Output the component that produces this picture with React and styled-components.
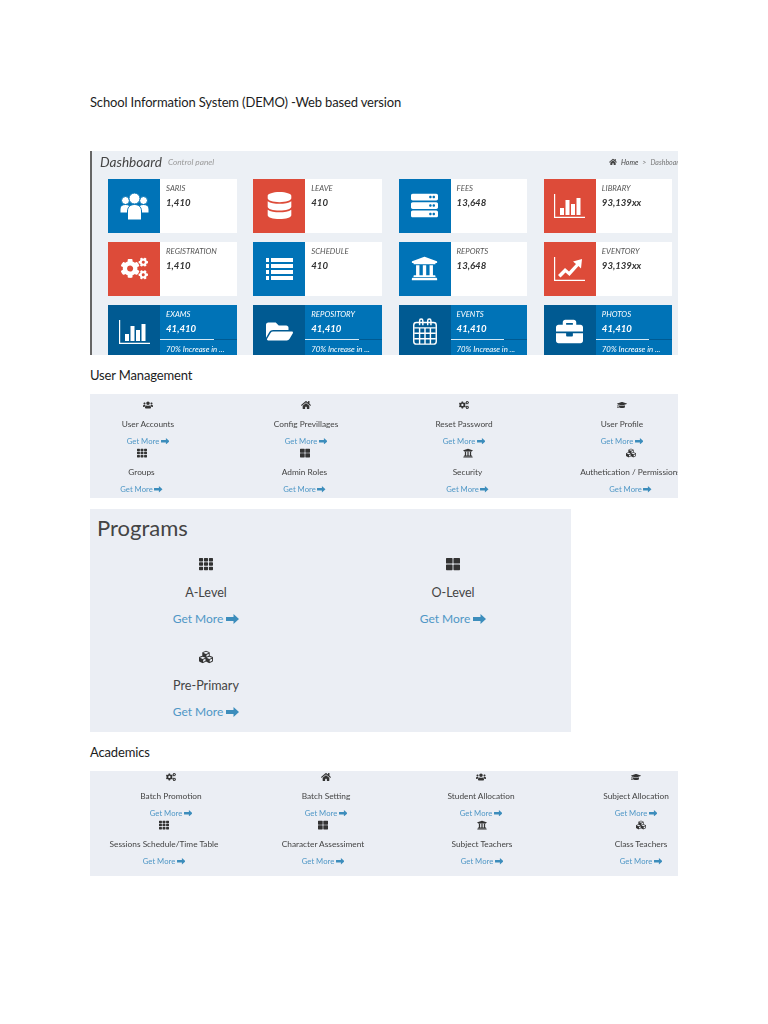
import { createGlobalStyle, styled } from "styled-components"
import {
  FaUsers, FaDatabase, FaServer, FaCogs, FaUniversity, FaFolderOpen, FaBriefcase,
  FaHome, FaTh, FaThLarge, FaCubes, FaGraduationCap,
} from "react-icons/fa"

const GlobalStyle = createGlobalStyle`
  html, body { margin: 0; background: #fff; }
  body { font-family: "Lato", "Liberation Sans", sans-serif; color: #222; }
`

const Page = styled.div`
  width: 768px;
  height: 1024px;
  overflow: hidden;
  box-sizing: border-box;
  padding: 82px 0 0 90px;
`

const Heading = styled.h2`
  margin: ${props => props.$margin};
  font-size: 13px;
  line-height: 18px;
  font-weight: 400;
  letter-spacing: -0.15px;
  color: #1c1c1c;
`

const Dashboard = styled.section`
  width: 588px;
  height: 204px;
  box-sizing: border-box;
  margin-top: 40px;
  overflow: hidden;
  background: #ecf0f5;
  border-left: 2px solid #666;
  font-style: italic;
  filter: blur(0.35px);
`

const DashHeader = styled.header`
  height: 28px;
  box-sizing: border-box;
  padding: 0 0 6px 8px;
  display: flex;
  align-items: center;
  gap: 6px;
  white-space: nowrap;
`

const DashTitle = styled.h1`
  margin: 0;
  font-size: 13.6px;
  font-weight: 400;
  color: #444;
`

const DashSub = styled.span`
  font-size: 8.3px;
  color: #9a9a9a;
`

const Crumbs = styled.div`
  margin-left: auto;
  width: 69px;
  overflow: hidden;
  display: flex;
  align-items: center;
  gap: 4px;
  font-size: 7px;
  color: #777;
  svg { color: #444; flex: none; width: 8px; height: 8px; }
  b { font-weight: 400; color: #444; }
`

const BoxGrid = styled.div`
  display: grid;
  grid-template-columns: repeat(4, 128.6px);
  grid-auto-rows: 54px;
  column-gap: 16.7px;
  row-gap: 9px;
  padding-left: 16px;
`

const Box = styled.article`
  display: flex;
  min-width: 0;
  background: ${props => (props.$filled ? "#0073b7" : "#fff")};
  color: ${props => (props.$filled ? "#fff" : "#333")};
`

const BoxIcon = styled.div`
  flex: none;
  width: 52px;
  display: flex;
  align-items: center;
  justify-content: center;
  background: ${props => props.$bg};
  color: #fff;
  font-size: 27px;
`

const BoxBody = styled.div`
  flex: 1;
  min-width: 0;
  padding: 4px 0 0 6px;
`

const BoxLabel = styled.div`
  font-size: 7.8px;
  line-height: 10px;
  text-transform: uppercase;
  color: ${props => (props.$filled ? "#fff" : "#555")};
`

const BoxValue = styled.div`
  margin-top: 3px;
  font-size: 9.6px;
  line-height: 13px;
  font-weight: 700;
`

const BoxProgress = styled.div`
  margin: 4px 0 0 -6px;
  height: 1px;
  background: #005a92;
  div { height: 1px; background: #d5e8f4; }
`

const BoxNote = styled.div`
  margin-top: 4px;
  font-size: 7.8px;
  line-height: 10px;
  white-space: nowrap;
`

const Panel = styled.section`
  width: ${props => props.$width};
  height: ${props => props.$height};
  box-sizing: border-box;
  background: #ebeef4;
  overflow: hidden;
  margin: ${props => props.$margin || 0};
  padding-top: ${props => props.$top || 0}px;
  ${props => props.$soft && "filter: blur(0.35px);"}
`

const LinkRow = styled.div`
  display: grid;
  grid-template-columns: repeat(4, 90px);
  column-gap: ${props => props.$gap}px;
  padding-left: ${props => props.$inset}px;
`

const LinkItem = styled.div`
  height: 48.5px;
  display: flex;
  flex-direction: column;
  align-items: center;
  white-space: nowrap;
  color: #444;
`

const SmallIcon = styled.div`
  height: 12px;
  font-size: 10px;
  color: #333;
  display: flex;
  align-items: center;
`

const LinkLabel = styled.div`
  margin-top: 7px;
  font-size: 8.3px;
  line-height: 12px;
`

const More = styled.a`
  margin-top: 5px;
  font-size: 7.7px;
  line-height: 12px;
  color: #4f97c6;
  display: flex;
  align-items: center;
  gap: 1.5px;
  svg { width: 8.5px; height: 6.5px; }
`

const ProgramsTitle = styled.h2`
  margin: 0;
  padding: 4px 0 0 7px;
  height: 40px;
  box-sizing: border-box;
  font-size: 22px;
  line-height: 30px;
  font-weight: 400;
  color: #444;
`

const ProgramGrid = styled.div`
  display: grid;
  grid-template-columns: repeat(2, 100px);
  grid-auto-rows: 93px;
  column-gap: 147px;
  padding-left: 66px;
`

const Program = styled.div`
  display: flex;
  flex-direction: column;
  align-items: center;
  white-space: nowrap;
`

const ProgramIcon = styled.div`
  height: 16px;
  margin-top: 7px;
  font-size: 14px;
  color: #333;
  display: flex;
  align-items: center;
`

const ProgramLabel = styled.div`
  margin-top: 12px;
  font-size: 12.6px;
  line-height: 18px;
  color: #444;
`

const ProgramMore = styled.a`
  margin-top: 8px;
  font-size: 12px;
  line-height: 18px;
  color: #4f97c6;
  display: flex;
  align-items: center;
  gap: 3px;
  svg { width: 13px; height: 10px; }
`

const ArrowIcon = () => (
  <svg viewBox="0 0 13 10" fill="#3c8dbc">
    <path d="M0 3h7.500V0L13 5l-5.500 5V7H0z" />
  </svg>
)

// the icons below have no close match in the package
const PeopleIcon = () => (
  <svg width="29" height="28" viewBox="0 0 29 28" fill="#fff" stroke="#0073b7" strokeWidth="1">
    <circle cx="5.500" cy="8.500" r="4" />
    <circle cx="23.500" cy="8.500" r="4" />
    <path d="M0 21v-4c0-3 2-4.500 5.500-4.500S11 14 11 17v4zM18 21v-4c0-3 2-4.500 5.500-4.500S29 14 29 17v4z" />
    <circle cx="14.500" cy="6.500" r="5.500" />
    <path d="M7.500 28v-9c0-4 3-6.500 7-6.500s7 2.500 7 6.500v9z" />
  </svg>
)

const ListIcon = () => (
  <svg width="27" height="22" viewBox="0 0 27 22" fill="#fff">
    <rect x="0" y="0" width="3" height="4" />
    <rect x="5" y="0" width="22" height="4" />
    <rect x="0" y="6" width="3" height="4" />
    <rect x="5" y="6" width="22" height="4" />
    <rect x="0" y="12" width="3" height="4" />
    <rect x="5" y="12" width="22" height="4" />
    <rect x="0" y="18" width="3" height="4" />
    <rect x="5" y="18" width="22" height="4" />
  </svg>
)

const BarsIcon = () => (
  <svg width="31" height="24" viewBox="0 0 31 24" fill="#fff">
    <path d="M0 0h1.200v22.800H31V24H0z" />
    <rect x="6" y="14" width="4" height="7" />
    <rect x="11.500" y="6" width="4" height="15" />
    <rect x="17" y="10" width="4" height="11" />
    <rect x="22.500" y="4" width="4" height="17" />
  </svg>
)

const TrendIcon = () => (
  <svg width="31" height="24" viewBox="0 0 31 24" fill="#fff">
    <path d="M0 0h1.200v22.800H31V24H0z" />
    <path d="M4 18l7-7 4 3.500 7-7.500-3-2.500L28 2l-1 9.500-2.500-2.500-9 10-4-3.500-5 5z" />
  </svg>
)

const CalendarIcon = () => (
  <svg width="26" height="27" viewBox="0 0 28 30" fill="none" stroke="#fff" strokeWidth="1.600">
    <rect x="1.500" y="5" width="25" height="24" rx="3" />
    <path d="M2 11h24M2 17h24M2 23h24M8 11v18M14 11v18M20 11v18" />
    <path d="M8 8V3a1.800 1.800 0 0 1 3.600 0v5M17 8V3a1.800 1.800 0 0 1 3.600 0v5" />
  </svg>
)

const BLUE = "#0073b7"
const RED = "#dd4b39"
const DARK = "#005a92"

const boxes = [
  { label: "Saris", value: "1,410", bg: BLUE, icon: <PeopleIcon /> },
  { label: "Leave", value: "410", bg: RED, icon: <FaDatabase /> },
  { label: "Fees", value: "13,648", bg: BLUE, icon: <FaServer /> },
  { label: "Library", value: "93,139xx", bg: RED, icon: <BarsIcon /> },
  { label: "Registration", value: "1,410", bg: RED, icon: <FaCogs size={27} /> },
  { label: "Schedule", value: "410", bg: BLUE, icon: <ListIcon /> },
  { label: "Reports", value: "13,648", bg: BLUE, icon: <FaUniversity /> },
  { label: "Eventory", value: "93,139xx", bg: RED, icon: <TrendIcon /> },
  { label: "Exams", value: "41,410", filled: true, icon: <BarsIcon /> },
  { label: "Repository", value: "41,410", filled: true, icon: <FaFolderOpen /> },
  { label: "Events", value: "41,410", filled: true, icon: <CalendarIcon /> },
  { label: "Photos", value: "41,410", filled: true, icon: <FaBriefcase /> },
]

const userRows = [
  {
    inset: 13, gap: 68,
    items: [
      ["User Accounts", <FaUsers />],
      ["Config Previllages", <FaHome />],
      ["Reset Password", <FaCogs />],
      ["User Profile", <FaGraduationCap />],
    ],
  },
  {
    inset: 6.5, gap: 73,
    items: [
      ["Groups", <FaTh />],
      ["Admin Roles", <FaThLarge />],
      ["Security", <FaUniversity />],
      ["Authetication / Permissions", <FaCubes />],
    ],
  },
]

const academicRows = [
  {
    inset: 36, gap: 65,
    items: [
      ["Batch Promotion", <FaCogs />],
      ["Batch Setting", <FaHome />],
      ["Student Allocation", <FaUsers />],
      ["Subject Allocation", <FaGraduationCap />],
    ],
  },
  {
    inset: 29, gap: 69,
    items: [
      ["Sessions Schedule/Time Table", <FaTh />],
      ["Character Assessiment", <FaThLarge />],
      ["Subject Teachers", <FaUniversity />],
      ["Class Teachers", <FaCubes />],
    ],
  },
]

const programs = [
  ["A-Level", <FaTh />],
  ["O-Level", <FaThLarge />],
  ["Pre-Primary", <FaCubes />],
]

const LinkRows = ({ rows }) =>
  rows.map((row, r) => (
    <LinkRow key={r} $inset={row.inset} $gap={row.gap}>
      {row.items.map(([label, icon]) => (
        <LinkItem key={label}>
          <SmallIcon>{icon}</SmallIcon>
          <LinkLabel>{label}</LinkLabel>
          <More>Get More <ArrowIcon /></More>
        </LinkItem>
      ))}
    </LinkRow>
  ))

const App = () => (
  <Page>
    <GlobalStyle />
    <Heading>School Information System (DEMO) -Web based version</Heading>

    <Dashboard>
      <DashHeader>
        <DashTitle>Dashboard</DashTitle>
        <DashSub>Control panel</DashSub>
        <Crumbs><FaHome /><b>Home</b><span>&gt;</span><span>Dashboard</span></Crumbs>
      </DashHeader>
      <BoxGrid>
        {boxes.map(box => (
          <Box key={box.label} $filled={box.filled}>
            <BoxIcon $bg={box.filled ? DARK : box.bg}>{box.icon}</BoxIcon>
            <BoxBody>
              <BoxLabel $filled={box.filled}>{box.label}</BoxLabel>
              <BoxValue>{box.value}</BoxValue>
              {box.filled && (
                <>
                  <BoxProgress><div style={{ width: "70%" }} /></BoxProgress>
                  <BoxNote>70% Increase in ...</BoxNote>
                </>
              )}
            </BoxBody>
          </Box>
        ))}
      </BoxGrid>
    </Dashboard>

    <Heading $margin="11px 0 10px">User Management</Heading>
    <Panel $width="588px" $height="104px" $top={5} $soft>
      <LinkRows rows={userRows} />
    </Panel>

    <Panel $width="481px" $height="223px" $margin="11px 0 0">
      <ProgramsTitle>Programs</ProgramsTitle>
      <ProgramGrid>
        {programs.map(([label, icon]) => (
          <Program key={label}>
            <ProgramIcon>{icon}</ProgramIcon>
            <ProgramLabel>{label}</ProgramLabel>
            <ProgramMore>Get More <ArrowIcon /></ProgramMore>
          </Program>
        ))}
      </ProgramGrid>
    </Panel>

    <Heading $margin="11px 0 10px">Academics</Heading>
    <Panel $width="588px" $height="105px" $soft>
      <LinkRows rows={academicRows} />
    </Panel>
  </Page>
)

export default App
